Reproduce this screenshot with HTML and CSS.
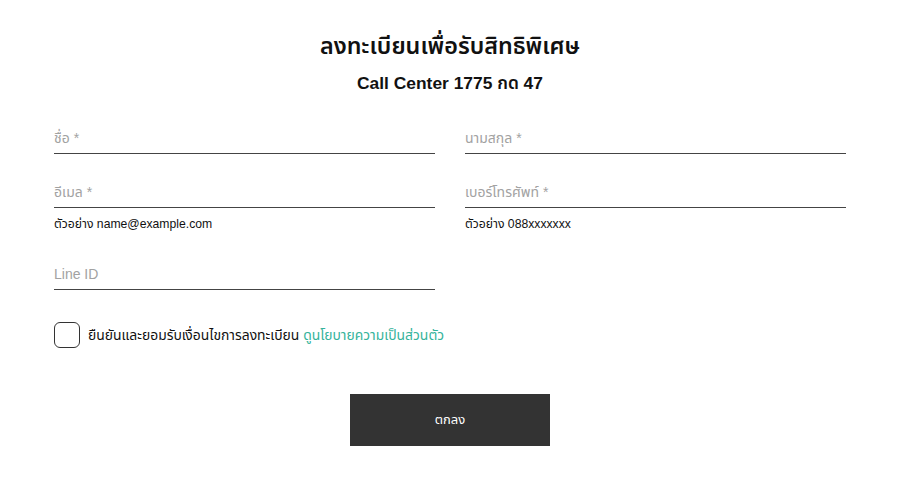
FILE: index.html
```html
<!DOCTYPE html>
<html lang="th">
<head>
<meta charset="utf-8">
<title>ลงทะเบียนเพื่อรับสิทธิพิเศษ</title>
<link rel="stylesheet" href="styles.css">
</head>
<body>
<main class="page">
  <h1 class="title">ลงทะเบียนเพื่อรับสิทธิพิเศษ</h1>
  <p class="subtitle">Call Center 1775 กด 47</p>
  <form class="form">
    <div class="grid">
      <div class="field"><input class="input" type="text" placeholder="ชื่อ *"></div>
      <div class="field"><input class="input" type="text" placeholder="นามสกุล *"></div>
      <div class="field"><input class="input" type="email" placeholder="อีเมล *"><div class="hint">ตัวอย่าง name@example.com</div></div>
      <div class="field"><input class="input" type="tel" placeholder="เบอร์โทรศัพท์ *"><div class="hint">ตัวอย่าง 088xxxxxxx</div></div>
      <div class="field"><input class="input" type="text" placeholder="Line ID"></div>
    </div>
    <label class="consent">
      <span class="box"></span>
      <span class="consent-text">ยืนยันและยอมรับเงื่อนไขการลงทะเบียน <a class="link" href="#">ดูนโยบายความเป็นส่วนตัว</a></span>
    </label>
    <div class="actions">
      <button class="submit" type="button">ตกลง</button>
    </div>
  </form>
</main>
</body>
</html>
```
FILE: styles.css
```css
* { box-sizing: border-box; }
html, body { margin: 0; background: #fff; }
body {
  font-family: "Liberation Sans", "Noto Sans Thai", "Noto Sans Thai UI", "Noto Sans", sans-serif;
  color: #111;
}
.page {
  width: 794px;
  margin: 0 auto;
  padding: 31px 2px 0 0;
}
.title {
  margin: 0;
  text-align: center;
  font-size: 23.3px;
  line-height: 30px;
  font-weight: 600;
  color: #111;
}
.subtitle {
  margin: 11px 0 0;
  text-align: center;
  font-size: 17.4px;
  line-height: 22px;
  font-weight: 600;
  color: #111;
}
.form { margin-top: 20px; }
.grid {
  display: grid;
  grid-template-columns: 1fr 1fr;
  gap: 14px 30px;
}
.field { display: flex; flex-direction: column; }
.input {
  height: 40px;
  border: 0;
  border-bottom: 1px solid #444;
  padding: 12px 0 3px;
  font: inherit;
  font-size: 14px;
  color: #333;
  background: transparent;
  outline: none;
}
.input::placeholder { color: #a2a2a2; }
.hint {
  padding: 7px 0 3px;
  font-size: 12.2px;
  line-height: 18px;
  color: #111;
}
.consent {
  margin-top: 32px;
  display: flex;
  align-items: center;
  gap: 8px;
}
.box {
  width: 26px;
  height: 26px;
  border: 1px solid #333;
  border-radius: 6px;
  flex: none;
}
.consent-text {
  font-size: 13.9px;
  line-height: 20px;
  color: #111;
}
.link { color: #35b39b; text-decoration: none; }
.actions {
  margin-top: 46px;
  display: flex;
  justify-content: center;
}
.submit {
  width: 200px;
  height: 52px;
  border: 0;
  background: #333;
  color: #fff;
  font: inherit;
  font-size: 13px;
  cursor: pointer;
}
```
